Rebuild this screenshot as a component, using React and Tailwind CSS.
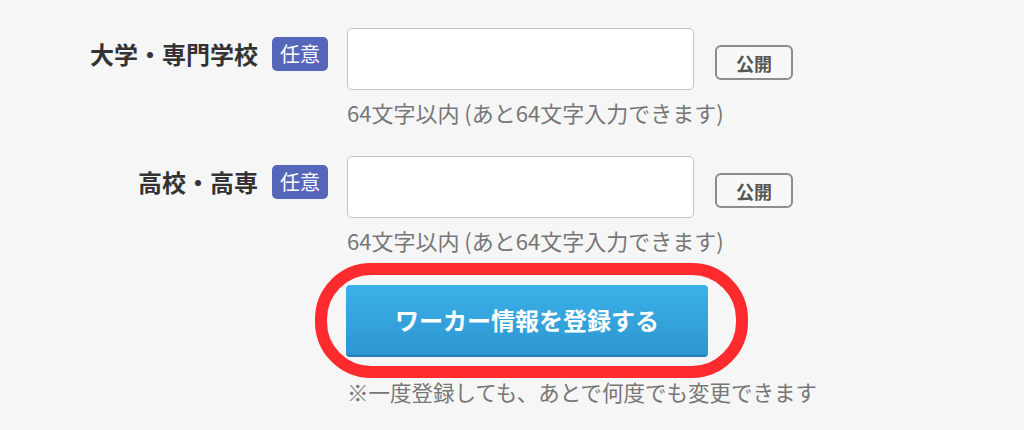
import React from 'react';

const font = { fontFamily: '"Noto Sans CJK JP", "Noto Sans", sans-serif' };

const Row = ({ label, className }) => (
  <div className={`flex flex-col ${className}`}>
    <div className="flex items-start">
      <div className="w-[328px] flex justify-end items-center gap-[14px] mt-[9px]">
        <span className="text-[24px] font-bold text-[#333] leading-[34px]">{label}</span>
        <span className="w-[56px] h-[34px] rounded-[5px] bg-[#5667bb] text-white text-[20px] leading-[34px] text-center">
          任意
        </span>
      </div>
      <input
        type="text"
        className="ml-[19px] w-[347px] h-[62px] rounded-[5px] border border-[#c4c4c4] bg-white"
      />
      <button className="ml-[21px] mt-[17px] w-[78px] h-[35px] rounded-[6px] border-2 border-[#8d8d8d] bg-[#f8f8f8] text-[18px] font-bold text-[#555] leading-none">
        公開
      </button>
    </div>
    <p className="ml-[347px] mt-[5px] text-[22px] leading-[34px] text-[#777]">
      64文字以内 (あと64文字入力できます)
    </p>
  </div>
);

export default function App() {
  return (
    <div className="w-[1024px] h-[430px] bg-[#f6f6f6] overflow-hidden" style={font}>
      <div className="pt-[28px]">
        <Row label="大学・専門学校" />
        <Row label="高校・高専" className="mt-[27px]" />
        <div className="ml-[346px] mt-[28px] relative w-[362px]">
          <button className="w-[362px] h-[72px] rounded-[4px] bg-gradient-to-b from-[#3cb1e9] to-[#2c96d0] border-b-2 border-[#2580b8] text-white text-[24px] font-bold">
            ワーカー情報を登録する
          </button>
          <div className="absolute top-[-22px] bottom-[-21px] left-[-31px] right-[-40px] border-[12px] border-[#fe2b2e] rounded-[56px] pointer-events-none" />
        </div>
        <p className="ml-[347px] mt-[20px] text-[21.5px] leading-[30px] text-[#777]">
          ※一度登録しても、あとで何度でも変更できます
        </p>
      </div>
    </div>
  );
}
